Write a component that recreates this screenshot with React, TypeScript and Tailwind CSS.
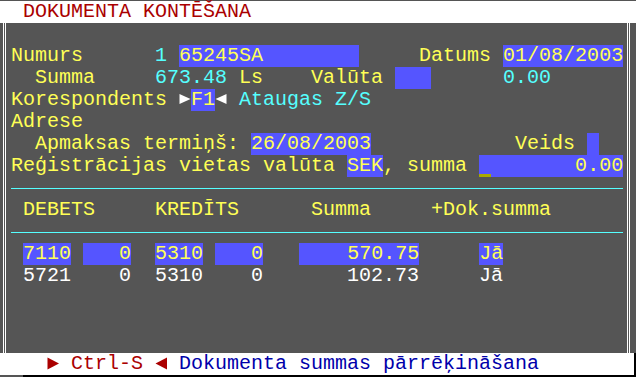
import React from 'react';

const YEL = 'text-[#ffff55]';
const CYA = 'text-[#55ffff]';

function Row({ children }: { children?: React.ReactNode }) {
  return <div className="h-[22px] leading-[22px] whitespace-pre">{children}</div>;
}

function Box({ children, className = '' }: { children?: React.ReactNode; className?: string }) {
  return (
    <span className={`inline-block h-[22px] align-top bg-[#5555ff] text-[#ffff55] ${className}`}>{children}</span>
  );
}

// solid arrow heads, drawn as in the text-mode font
function Tri({ dir, color, tall }: { dir: 'r' | 'l'; color: string; tall?: boolean }) {
  const pts = tall
    ? dir === 'r'
      ? '0.5,4.5 12,10.5 0.5,16.5'
      : '12,4.5 0.5,10.5 12,16.5'
    : dir === 'r'
      ? '0.5,5 11.5,10 0.5,15'
      : '11.5,5 0.5,10 11.5,15';
  return (
    <svg width="12" height="22" viewBox="0 0 12 22" className="inline-block align-top">
      <polygon points={pts} fill={color} />
    </svg>
  );
}

function Rule() {
  return (
    <div className="h-[22px] flex items-center">
      <div className="h-px w-full bg-[#55ffff]" />
    </div>
  );
}

export default function App() {
  return (
    <div className="w-[636px] h-[377px] bg-[#555555] font-['Liberation_Mono','DejaVu_Sans_Mono',monospace] text-[20px] overflow-hidden">
      {/* top edge */}
      <div className="h-px bg-[#555555]" />

      {/* title bar */}
      <div className="h-[22px] leading-[22px] bg-white pl-[11px] whitespace-pre text-[#aa0000]">
        {' DOKUMENTA KONTĒŠANA'}
      </div>

      {/* main panel */}
      <div className="flex h-[330px]">
        <div className="w-[3px]" />
        <div className="w-[3px] border-x border-white" />
        <div className="w-[5px]" />
        <div className="w-[612px]">
          <Row />
          <Row>
            <span className={YEL}>{'Numurs      '}</span>
            <span className={CYA}>{'1 '}</span>
            <Box>{'65245SA        '}</Box>
            {'     '}
            <span className={YEL}>{'Datums '}</span>
            <Box>{'01/08/2003'}</Box>
          </Row>
          <Row>
            <span className={YEL}>{'  Summa     '}</span>
            <span className={CYA}>{'673.48 '}</span>
            <span className={YEL}>{'Ls    Valūta '}</span>
            <Box>{'   '}</Box>
            {'      '}
            <span className={CYA}>{'0.00'}</span>
          </Row>
          <Row>
            <span className={YEL}>{'Korespondents '}</span>
            <Tri dir="r" color="#ffffff" />
            <Box>{'F1'}</Box>
            <Tri dir="l" color="#ffffff" />
            <span className={CYA}>{' Ataugas Z/S'}</span>
          </Row>
          <Row>
            <span className={YEL}>{'Adrese'}</span>
          </Row>
          <Row>
            <span className={YEL}>{'  Apmaksas termiņš: '}</span>
            <Box>{'26/08/2003'}</Box>
            {'            '}
            <span className={YEL}>{'Veids '}</span>
            <Box>{' '}</Box>
          </Row>
          <Row>
            <span className={YEL}>{'Reģistrācijas vietas valūta '}</span>
            <Box>{'SEK'}</Box>
            <span className={YEL}>{', summa '}</span>
            <Box className="box-border border-b-[3px] border-[#aaaa00]">{' '}</Box>
            <Box>{'       0.00'}</Box>
          </Row>
          <Rule />
          <Row>
            <span className={YEL}>{' DEBETS     KREDĪTS      Summa     +Dok.summa'}</span>
          </Row>
          <Rule />
          <Row>
            {' '}
            <Box>{'7110'}</Box>
            {' '}
            <Box>{'   0'}</Box>
            {'  '}
            <Box>{'5310'}</Box>
            {' '}
            <Box>{'   0'}</Box>
            {'   '}
            <Box>{'    570.75'}</Box>
            {'     '}
            <Box>{'Jā'}</Box>
          </Row>
          <Row>
            <span className="text-white">
              {' 5721' + ' ' + '   0' + '  ' + '5310' + ' ' + '   0' + '   ' + '    102.73' + '     ' + 'Jā'}
            </span>
          </Row>
          <Row />
          <Row />
          <Row />
        </div>
        <div className="w-[4px]" />
        <div className="w-[3px] border-x border-white" />
        <div className="flex-1" />
      </div>

      {/* status line */}
      <div className="flex h-[22px]">
        <div className="flex-1 bg-white pl-[11px] leading-[22px] whitespace-pre">
          {'   '}
          <Tri dir="r" color="#aa0000" tall />
          <span className="text-[#aa0000]">{' Ctrl-S '}</span>
          <Tri dir="l" color="#aa0000" tall />
          <span className="text-[#0000aa]">{' Dokumenta summas pārrēķināšana'}</span>
        </div>
        <div className="w-[2px] bg-black" />
      </div>
      <div className="flex h-[2px]">
        <div className="w-[23px] bg-[#555555]" />
        <div className="flex-1 bg-black" />
      </div>
    </div>
  );
}
